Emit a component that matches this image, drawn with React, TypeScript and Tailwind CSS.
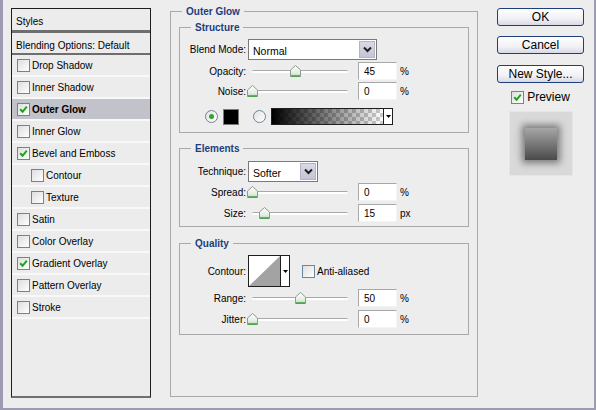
import type { ReactNode } from "react";

const ITEMS = [
  { label: "Drop Shadow", on: false },
  { label: "Inner Shadow", on: false },
  { label: "Outer Glow", on: true, active: true },
  { label: "Inner Glow", on: false },
  { label: "Bevel and Emboss", on: true },
  { label: "Contour", on: false, sub: true },
  { label: "Texture", on: false, sub: true },
  { label: "Satin", on: false },
  { label: "Color Overlay", on: false },
  { label: "Gradient Overlay", on: true },
  { label: "Pattern Overlay", on: false },
  { label: "Stroke", on: false },
];

function Check({ on }: { on?: boolean }) {
  return (
    <span className="flex h-[13px] w-[13px] shrink-0 items-center justify-center border border-[#6f839f] bg-[linear-gradient(135deg,#dedede,#ffffff)]">
      {on && (
        <svg width="9" height="9" viewBox="0 0 9 9">
          <path d="M1.2 4.2 L3.6 6.8 L7.8 1.6" fill="none" stroke="#21a121" strokeWidth="2" />
        </svg>
      )}
    </span>
  );
}

function Radio({ on }: { on?: boolean }) {
  return (
    <span className="flex h-[13px] w-[13px] shrink-0 items-center justify-center rounded-full border border-[#6f839f] bg-[linear-gradient(135deg,#e2e2e2,#ffffff)]">
      {on && <span className="h-[5px] w-[5px] rounded-full bg-[#2fa52f]" />}
    </span>
  );
}

function Thumb() {
  return (
    <svg width="11" height="12" viewBox="0 0 11 12">
      <defs>
        <linearGradient id="th" x1="0" y1="0" x2="0" y2="1">
          <stop offset="0" stopColor="#ffffff" />
          <stop offset="0.7" stopColor="#e4ebe4" />
          <stop offset="1" stopColor="#b6d8b6" />
        </linearGradient>
      </defs>
      <path d="M0.5 5 L5.5 0.5 L10.5 5 V11.5 H0.5 Z" fill="url(#th)" stroke="#8a9c8a" />
      <path d="M1 11 H10" stroke="#3fa53f" strokeWidth="1.5" />
    </svg>
  );
}

// pos is the thumb centre in px along the 96px track
function Slider({ pos }: { pos: number }) {
  return (
    <div className="relative ml-[6px] h-full w-[96px]">
      <div className="absolute left-0 right-0 top-[8px] h-[3px] rounded-full border-t border-[#a9a9a9] bg-white" />
      <div className="absolute top-[3px]" style={{ left: pos - 5 }}>
        <Thumb />
      </div>
    </div>
  );
}

function NumBox({ value, unit }: { value: string; unit: string }) {
  return (
    <>
      <div className="ml-[10px] flex h-[18px] w-[39px] items-center border border-[#a8a8a8] border-b-[#f4f4f4] border-r-[#f4f4f4] bg-white pl-[5px]">
        {value}
      </div>
      <span className="ml-[3px]">{unit}</span>
    </>
  );
}

function Label({ children }: { children: ReactNode }) {
  return <span className="w-[66px] shrink-0 text-right">{children}</span>;
}

function SliderRow({ label, pos, value, unit, extra }: { label: string; pos: number; value: string; unit: string; extra: string }) {
  return (
    <div className={`flex h-[18px] items-center ${extra}`}>
      <Label>{label}</Label>
      <Slider pos={pos} />
      <NumBox value={value} unit={unit} />
    </div>
  );
}

function Chevron() {
  return (
    <svg width="9" height="7" viewBox="0 0 9 7">
      <path d="M1 1.5 L4.5 5 L8 1.5" fill="none" stroke="#1e1e1e" strokeWidth="2" />
    </svg>
  );
}

function Select({ value, width }: { value: string; width: string }) {
  return (
    <div className={`ml-[2px] flex h-[21px] items-stretch border border-[#7a7a7a] bg-white ${width}`}>
      <span className="flex-1 pl-[4px] pt-[4px] text-[10.5px]">{value}</span>
      <span className="m-[1px] flex w-[16px] items-center justify-center border border-[#b3b4c8] bg-[linear-gradient(#d9dae6,#c3c4d6)]">
        <Chevron />
      </span>
    </div>
  );
}

function Group({ title, extra, children }: { title: string; extra: string; children: ReactNode }) {
  return (
    <fieldset className={`border border-[#a9a9a9] ${extra}`}>
      <legend className="ml-[11px] px-1 font-bold leading-[13px] text-[#1d3e7c]">{title}</legend>
      {children}
    </fieldset>
  );
}

function StylesList() {
  return (
    <div className="mt-[3px] flex h-[390px] w-[140px] shrink-0 flex-col border border-[#1e1e1e] border-b-2 border-b-[#707070] bg-[#ececec]">
      <div className="h-[24px] border-b-[3px] border-[#6e6e6e] pl-[4px] pt-[5px]">Styles</div>
      <div className="h-[22px] border-b-2 border-[#6e6e6e] pl-[4px] pt-[5px]">Blending Options: Default</div>
      {ITEMS.map((it) => (
        <div
          key={it.label}
          className={`flex h-[22px] items-center gap-[2px] border-b-2 border-[#f8f8f8] ${it.sub ? "pl-[19px]" : "pl-[5px]"} ${it.active ? "bg-[#c2c2ca] font-bold" : ""}`}
        >
          <Check on={it.on} />
          <span>{it.label}</span>
        </div>
      ))}
    </div>
  );
}

function OuterGlow() {
  return (
    <fieldset className="h-[392px] w-[308px] shrink-0 border border-[#a9a9a9] px-[8px]">
      <legend className="ml-[3px] px-1 font-bold leading-[13px] text-[#1d3e7c]">Outer Glow</legend>

      <Group title="Structure" extra="mt-[3px] pb-[7px]">
        <div className="mt-[5px] flex h-[21px] items-center">
          <Label>Blend Mode:</Label>
          <Select value="Normal" width="w-[129px]" />
        </div>
        <SliderRow label="Opacity:" pos={43} value="45" unit="%" extra="mt-[2px]" />
        <SliderRow label="Noise:" pos={0} value="0" unit="%" extra="mt-[2px]" />
        <div className="mt-[8px] flex h-[17px] items-center">
          <span className="ml-[25px]"><Radio on /></span>
          <span className="ml-[5px] h-[16px] w-[16px] border border-[#7a7a7a] bg-black" />
          <span className="ml-[14px]"><Radio /></span>
          <div className="ml-[5px] flex h-[17px] w-[122px] border border-[#1e1e1e] bg-white">
            <svg width="111" height="15" viewBox="0 0 111 15" className="block">
              <defs>
                <pattern id="ck" width="8" height="8" patternUnits="userSpaceOnUse">
                  <rect width="8" height="8" fill="#ffffff" />
                  <rect width="4" height="4" fill="#cccccc" />
                  <rect x="4" y="4" width="4" height="4" fill="#cccccc" />
                </pattern>
                <linearGradient id="gr" x1="0" y1="0" x2="1" y2="0">
                  <stop offset="0" stopColor="#000" stopOpacity="1" />
                  <stop offset="1" stopColor="#000" stopOpacity="0" />
                </linearGradient>
              </defs>
              <rect width="111" height="15" fill="url(#ck)" />
              <rect width="111" height="15" fill="url(#gr)" />
            </svg>
            <span className="flex flex-1 items-center justify-center border-l border-[#1e1e1e]">
              <svg width="5" height="3" viewBox="0 0 5 3"><path d="M0 0 H5 L2.5 3 Z" fill="#000" /></svg>
            </span>
          </div>
        </div>
      </Group>

      <Group title="Elements" extra="mt-[9px] pb-[4px]">
        <div className="mt-[6px] flex h-[21px] items-center">
          <Label>Technique:</Label>
          <Select value="Softer" width="w-[70px]" />
        </div>
        <SliderRow label="Spread:" pos={0} value="0" unit="%" extra="mt-[1px]" />
        <SliderRow label="Size:" pos={12} value="15" unit="px" extra="mt-[3px]" />
      </Group>

      <Group title="Quality" extra="mt-[10px] pb-[6px]">
        <div className="mt-[5px] flex h-[32px] items-center">
          <Label>Contour:</Label>
          <div className="ml-[2px] flex h-[32px] w-[42px] border border-[#1e1e1e] bg-white">
            <svg width="31" height="30" viewBox="0 0 31 30" className="block">
              <path d="M0 30 L31 0 V30 Z" fill="#a3a3a3" />
            </svg>
            <span className="flex flex-1 items-center justify-center border-l border-[#1e1e1e]">
              <svg width="5" height="3" viewBox="0 0 5 3"><path d="M0 0 H5 L2.5 3 Z" fill="#000" /></svg>
            </span>
          </div>
          <span className="ml-[12px]"><Check /></span>
          <span className="ml-[2px]">Anti-aliased</span>
        </div>
        <SliderRow label="Range:" pos={48} value="50" unit="%" extra="mt-[2px]" />
        <SliderRow label="Jitter:" pos={0} value="0" unit="%" extra="mt-[3px]" />
      </Group>
    </fieldset>
  );
}

function Btn({ children, extra }: { children: ReactNode; extra: string }) {
  return (
    <button className={`h-[18px] w-[87px] rounded-[3px] border border-[#1f3f78] bg-[linear-gradient(#ffffff,#f1f1f6_60%,#d8d9e6)] text-[12px] leading-[16px] text-black ${extra}`}>
      {children}
    </button>
  );
}

function RightColumn() {
  return (
    <div className="mt-[3px] flex w-[87px] shrink-0 flex-col items-center">
      <Btn extra="">OK</Btn>
      <Btn extra="mt-[10px]">Cancel</Btn>
      <Btn extra="mt-[11px]">New Style...</Btn>
      <div className="mt-[7px] flex h-[14px] items-center gap-[3px] text-[12px]">
        <Check on />
        <span>Preview</span>
      </div>
      <div className="mt-[7px] flex h-[65px] w-[64px] items-center justify-center border border-[#e6e6e6] bg-[#d9d9d9]">
        <div className="h-[32px] w-[32px] bg-[linear-gradient(#a6a6a6,#4a4a4a)] shadow-[0_0_7px_3px_rgba(0,0,0,0.45)]" />
      </div>
    </div>
  );
}

export default function App() {
  return (
    <div className="flex h-[410px] w-[596px] gap-[19px] border-b-2 border-l-[3px] border-r-2 border-[#9d9bb1] bg-[#ededed] pl-2 pt-[5px] font-['Liberation_Sans',Arial,sans-serif] text-[10px] text-black">
      <StylesList />
      <OuterGlow />
      <RightColumn />
    </div>
  );
}
